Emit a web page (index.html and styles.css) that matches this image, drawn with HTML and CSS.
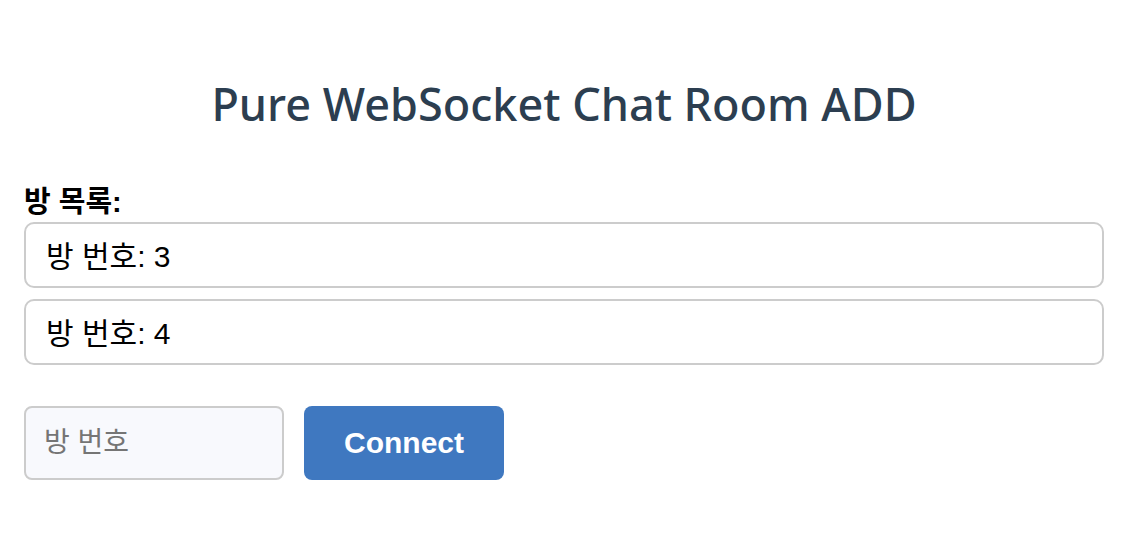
FILE: index.html
```html
<!DOCTYPE html>
<html lang="ko">
<head>
    <meta charset="UTF-8">
    <meta name="viewport" content="width=device-width, initial-scale=1.0">
    <title>Pure WebSocket Chat Room ADD</title>

    <link rel="stylesheet" href="styles.css">
</head>
<body>
    <main class="container">
        <h1>Pure WebSocket Chat Room ADD</h1>

        <div class="rooms">
            <p class="roomsTitulo">방 목록:</p>
            <ul id="listaSalas">
                <li class="sala">방 번호: 3</li>
                <li class="sala">방 번호: 4</li>
            </ul>
        </div>

        <div class="conectar">
            <input type="text" id="numeroSala" placeholder="방 번호">
            <button id="btnConectar">Connect</button>
        </div>
    </main>
</body>
</html>
```

FILE: styles.css
```css
body{
    margin: 0;
    padding: 0;
    background-color: white;
    font-family: "Liberation Sans", "Noto Sans CJK KR", sans-serif;
    color: black;
}
.container{
    padding: 50px 36px 0px 24px;
}
h1{
    margin: 23px 0px 44px;
    text-align: center;
    font-family: "Noto Sans", "Noto Sans CJK KR", sans-serif;
    font-weight: 500;
    font-size: 45px;
    color: #2c3e50;
}
.roomsTitulo{
    margin: 0px 0px 2px;
    font-weight: bold;
    font-size: 29px;
}
#listaSalas{
    list-style: none;
    margin: 0;
    padding: 0;
}
.sala{
    box-sizing: border-box;
    border: 2px solid #cccccc;
    border-radius: 10px;
    height: 66px;
    padding: 0px 20px 3px;
    display: flex;
    align-items: center;
    font-size: 30px;
    margin-bottom: 11px;
}
.conectar{
    display: flex;
    gap: 20px;
    margin-top: 41px;
}
#numeroSala{
    width: 260px;
    height: 74px;
    box-sizing: border-box;
    border: 2px solid #cccccc;
    border-radius: 8px;
    background-color: #f8f9fd;
    padding: 0px 18px;
    font-family: inherit;
    font-size: 28px;
}
#numeroSala::placeholder{
    color: #757575;
}
#btnConectar{
    width: 200px;
    height: 74px;
    border: 0;
    border-radius: 8px;
    background-color: #3f78c0;
    color: white;
    font-family: "Liberation Sans", sans-serif;
    font-weight: bold;
    font-size: 30px;
}
```
